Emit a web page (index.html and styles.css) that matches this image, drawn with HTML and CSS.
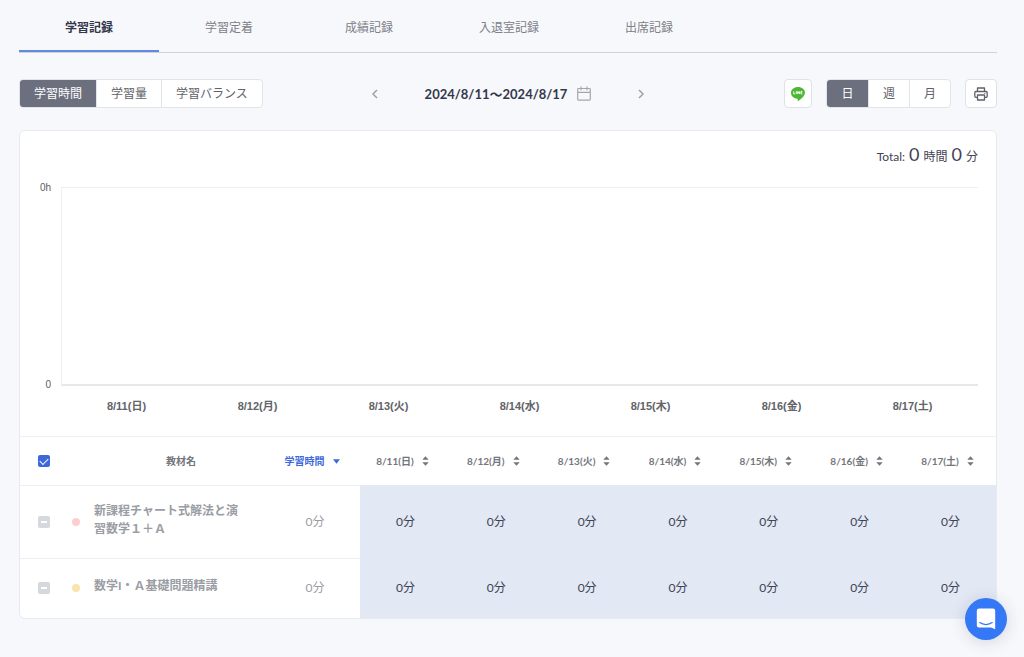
FILE: index.html
```html
<!DOCTYPE html>
<html lang="ja">
<head>
<meta charset="utf-8">
<meta name="viewport" content="width=device-width, initial-scale=1">
<title>学習記録</title>
<link rel="stylesheet" href="styles.css">
</head>
<body>
<svg class="defs" aria-hidden="true">
  <symbol id="sort" viewBox="0 0 7 10"><path d="M3.500 .3L6.700 3.800H.3zM3.500 9.700L.3 6.200h6.400z" fill="currentColor"/></symbol>
</svg>
<main class="page">
  <nav class="tabs">
    <a class="tab tab-active" href="#record" aria-current="page">学習記録</a>
    <a class="tab" href="#retention">学習定着</a>
    <a class="tab" href="#grades">成績記録</a>
    <a class="tab" href="#entry">入退室記録</a>
    <a class="tab" href="#attendance">出席記録</a>
  </nav>

  <div class="toolbar">
    <div class="toolbar-side">
      <div class="segments segments-text">
        <button class="segment segment-active" type="button">学習時間</button>
        <button class="segment" type="button">学習量</button>
        <button class="segment" type="button">学習バランス</button>
      </div>
    </div>
    <div class="period">
      <button class="icon-button" type="button" aria-label="前の期間"><svg width="8" height="10" viewBox="0 0 8 10"><path d="M6 1L2 5l4 4" fill="none" stroke="currentColor" stroke-width="1.5"/></svg></button>
      <button class="period-date" type="button">2024/8/11〜2024/8/17
        <svg width="14" height="15" viewBox="0 0 14 15"><path d="M1.5 2.5h11a.8.8 0 0 1 .8.8v10a.8.8 0 0 1-.8.8h-11a.8.8 0 0 1-.8-.8v-10a.8.8 0 0 1 .8-.8zM.7 6.3h12.6M4 .4v3.8M10 .4v3.8" fill="none" stroke="#a5a7ad" stroke-width="1.2"/></svg>
      </button>
      <button class="icon-button" type="button" aria-label="次の期間"><svg width="8" height="10" viewBox="0 0 8 10"><path d="M2 1l4 4-4 4" fill="none" stroke="currentColor" stroke-width="1.5"/></svg></button>
    </div>
    <div class="toolbar-side toolbar-end">
      <button class="box-button" type="button" aria-label="LINE">
        <svg width="16" height="16" viewBox="0 0 16 16"><path d="M8 1c4 0 7 2.500 7 5.700 0 2.800-3 5.600-6.700 8.300-.6.400-.7 0-.6-.6.100-.7.100-1.600-.5-1.700C3.600 12.300 1 9.800 1 6.700 1 3.500 4 1 8 1z" fill="#4cb735"/><path d="M3.700 5.300v2.600h1.500M6.300 5.200v2.900M7.700 8.100V5.400l1.700 2.500V5.200M12.400 5.400h-1.500v2.500h1.500M10.900 6.650h1.400" fill="none" stroke="#fff" stroke-width=".9"/></svg>
      </button>
      <div class="segments segments-unit">
        <button class="segment segment-active" type="button">日</button>
        <button class="segment" type="button">週</button>
        <button class="segment" type="button">月</button>
      </div>
      <button class="box-button box-button-wide" type="button" aria-label="印刷">
        <svg width="14" height="14" viewBox="0 0 14 14"><path d="M3.500 4.500V1h7v3.500M3.500 10.300H2A1.200 1.200 0 0 1 .8 9.100V5.700A1.200 1.200 0 0 1 2 4.500h10a1.200 1.200 0 0 1 1.200 1.200v3.400a1.200 1.200 0 0 1-1.200 1.200h-1.500M3.500 8h7v5h-7z" fill="none" stroke="#5f6068" stroke-width="1.300" stroke-linejoin="round"/><circle cx="10.900" cy="6.300" r=".6" fill="#5f6068"/></svg>
      </button>
    </div>
  </div>

  <section class="card">
    <div class="chart">
      <p class="total"><span>Total:</span> <span class="total-number">0</span> <span>時間</span> <span class="total-number">0</span> <span>分</span></p>
      <div class="chart-body">
        <div class="y-axis"><span>0h</span><span>0</span></div>
        <div class="plot"></div>
        <div class="x-axis"><span>8/11(日)</span><span>8/12(月)</span><span>8/13(火)</span><span>8/14(水)</span><span>8/15(木)</span><span>8/16(金)</span><span>8/17(土)</span></div>
      </div>
    </div>

    <table class="records">
      <colgroup><col class="col-check"><col class="col-dot"><col class="col-name"><col class="col-time"><col span="7"></colgroup>
      <thead>
        <tr>
          <th><input class="check" type="checkbox" aria-label="すべて選択" checked></th>
          <th></th>
          <th>教材名</th>
          <th><button class="sort sort-active" type="button">学習時間<svg width="7" height="5" viewBox="0 0 8 5"><path d="M0 0h8L4 5z" fill="currentColor"/></svg></button></th>
          <th><button class="sort" type="button">8/11(日)<svg width="7" height="10"><use href="#sort"/></svg></button></th>
          <th><button class="sort" type="button">8/12(月)<svg width="7" height="10"><use href="#sort"/></svg></button></th>
          <th><button class="sort" type="button">8/13(火)<svg width="7" height="10"><use href="#sort"/></svg></button></th>
          <th><button class="sort" type="button">8/14(水)<svg width="7" height="10"><use href="#sort"/></svg></button></th>
          <th><button class="sort" type="button">8/15(木)<svg width="7" height="10"><use href="#sort"/></svg></button></th>
          <th><button class="sort" type="button">8/16(金)<svg width="7" height="10"><use href="#sort"/></svg></button></th>
          <th><button class="sort" type="button">8/17(土)<svg width="7" height="10"><use href="#sort"/></svg></button></th>
        </tr>
      </thead>
      <tbody>
        <tr class="row-tall">
          <td><input class="check check-off" type="checkbox" aria-label="新課程チャート式解法と演習数学1+A" disabled></td>
          <td class="dot-cell"><span class="dot dot-red"></span></td>
          <td class="name"><div class="name-text">新課程チャート式解法と演習数学１＋Ａ</div></td>
          <td class="time">0分</td>
          <td class="day">0分</td><td class="day">0分</td><td class="day">0分</td><td class="day">0分</td><td class="day">0分</td><td class="day">0分</td><td class="day">0分</td>
        </tr>
        <tr>
          <td><input class="check check-off" type="checkbox" aria-label="数学I・A基礎問題精講" disabled></td>
          <td class="dot-cell"><span class="dot dot-yellow"></span></td>
          <td class="name"><div class="name-text">数学I・Ａ基礎問題精講</div></td>
          <td class="time">0分</td>
          <td class="day">0分</td><td class="day">0分</td><td class="day">0分</td><td class="day">0分</td><td class="day">0分</td><td class="day">0分</td><td class="day">0分</td>
        </tr>
      </tbody>
    </table>
  </section>
</main>
<button class="chat" type="button" aria-label="チャットを開く">
  <svg width="20" height="22" viewBox="0 0 20 22"><path d="M3 .5h14A2.200 2.200 0 0 1 19.200 2.700v18.600L15 19.500H3A2.200 2.200 0 0 1 .8 17.300V2.700A2.200 2.200 0 0 1 3 .5z" fill="#fff"/><path d="M3.800 14.600c3.500 2.600 8.900 2.600 12.400 0" fill="none" stroke="#3478f6" stroke-width="1.200" stroke-linecap="round"/></svg>
</button>
</body>
</html>
```
FILE: styles.css
```css
* {
  box-sizing: border-box;
}

body {
  margin: 0;
  background: #f6f8fc;
  color: #3f4254;
  font-family: Lato, "Noto Sans CJK JP", sans-serif;
  font-size: 12px;
  line-height: 18px;
}

button {
  margin: 0;
  padding: 0;
  border: 0;
  background: none;
  color: inherit;
  font: inherit;
  cursor: pointer;
}

svg {
  display: block;
  flex: none;
}

.defs {
  display: none;
}

.page {
  padding: 0 27px 40px 19px;
}

/* Tabs */
.tabs {
  display: flex;
  height: 53px;
  border-bottom: 1px solid #cfd1d8;
}

.tab {
  display: flex;
  align-items: center;
  justify-content: center;
  width: 140px;
  padding-top: 5px;
  border-bottom: 2px solid transparent;
  color: #7e8087;
  text-decoration: none;
}

.tab-active {
  border-bottom-color: #6189e2;
  color: #34374a;
  font-weight: 700;
}

/* Toolbar */
.toolbar {
  display: flex;
  align-items: center;
  padding: 26px 0 22px;
}

.toolbar-side {
  display: flex;
  flex: 1;
  gap: 14px;
}

.toolbar-end {
  justify-content: flex-end;
}

.segments {
  display: flex;
  height: 29px;
  overflow: hidden;
  border: 1px solid #e1e4ea;
  border-radius: 4px;
  background: #fff;
}

.segment {
  padding: 0 14px;
  color: #606268;
}

.segment + .segment {
  border-left: 1px solid #e1e4ea;
}

.segments-unit .segment {
  width: 41px;
}

.segments .segment-active {
  background: #6b6f7e;
  color: #fff;
}

.period {
  display: flex;
  align-items: center;
  gap: 46px;
}

.icon-button {
  color: #9fa2aa;
}

.period-date {
  display: flex;
  align-items: center;
  gap: 10px;
  color: #34374a;
  font-size: 13px;
  font-weight: 700;
}

.box-button {
  display: flex;
  align-items: center;
  justify-content: center;
  width: 28px;
  height: 29px;
  border: 1px solid #dfe1e8;
  border-radius: 4px;
  background: #fff;
}

.box-button-wide {
  width: 32px;
}

/* Card */
.card {
  overflow: hidden;
  border: 1px solid #e8eaef;
  border-radius: 6px;
  background: #fff;
}

.chart {
  padding: 11px 18px 10px;
}

.total {
  display: flex;
  align-items: baseline;
  justify-content: flex-end;
  gap: 4px;
  margin: 0;
  line-height: 24px;
}

.total-number {
  font-size: 18px;
}

.chart-body {
  display: grid;
  grid-template-columns: 23px 1fr;
  grid-template-rows: 199px 40px;
  padding-top: 18px;
}

.y-axis {
  display: flex;
  flex-direction: column;
  justify-content: space-between;
  margin: -8px 0;
  padding-right: 10px;
  color: #5c5e62;
  font-family: "Liberation Sans", sans-serif;
  font-size: 10px;
  text-align: right;
}

.plot {
  border: solid #efeff1;
  border-width: 1px 0 2px 1px;
  border-bottom-color: #e8e8ea;
}

.x-axis {
  display: flex;
  align-items: center;
  grid-column: 2;
  color: #626468;
  font-family: "Liberation Sans", "Noto Sans CJK JP", sans-serif;
  font-size: 11px;
  font-weight: 700;
}

.x-axis span {
  flex: 1;
  text-align: center;
}

/* Records table */
.records {
  width: 100%;
  border-collapse: collapse;
  table-layout: fixed;
}

.col-check {
  width: 48px;
}

.col-dot {
  width: 24px;
}

.col-name {
  width: 178px;
}

.col-time {
  width: 90px;
}

.records th,
.records td {
  padding: 0;
  text-align: center;
  vertical-align: middle;
}

.records th {
  height: 49px;
  border-top: 1px solid #eceef2;
  color: #74767b;
  font-size: 10px;
  font-weight: 700;
}

.records td {
  height: 59px;
  border-top: 1px solid #eceef2;
}

.records .row-tall td {
  height: 73px;
}

.sort {
  display: inline-flex;
  align-items: center;
  gap: 8px;
  margin-right: 6px;
}

.sort-active {
  color: #3d68dc;
}

.check {
  display: grid;
  place-items: center;
  width: 12px;
  height: 12px;
  margin: 0 auto;
  border-radius: 2px;
  appearance: none;
  background: #3d68dc;
}

.check::before {
  width: 7px;
  height: 4px;
  margin-bottom: 2px;
  border: solid #fff;
  border-width: 0 0 1px 1px;
  content: "";
  transform: rotate(-45deg);
}

.check-off {
  background: #d5d8dc;
}

.check-off::before {
  width: 6px;
  height: 2px;
  margin: 0;
  border: 0;
  background: #fff;
  transform: none;
}

.records .dot-cell {
  padding-left: 4px;
  text-align: left;
}

.dot {
  display: block;
  width: 8px;
  height: 8px;
  border-radius: 50%;
}

.dot-red {
  background: #fbcfd0;
}

.dot-yellow {
  background: #fbe3ad;
}

.records .name {
  padding: 0 24px 4px 2px;
  color: #9a9da4;
  font-weight: 700;
  text-align: left;
}

.records .time {
  color: #9a9da4;
}

.records .day {
  border-color: #e2e8f4;
  background: #e2e8f4;
}

/* Chat launcher */
.chat {
  position: fixed;
  right: 17px;
  bottom: 17px;
  display: flex;
  align-items: center;
  justify-content: center;
  width: 42px;
  height: 42px;
  border-radius: 50%;
  background: #3478f6;
  box-shadow: 0 2px 16px rgba(30, 40, 70, 0.16);
}
```
